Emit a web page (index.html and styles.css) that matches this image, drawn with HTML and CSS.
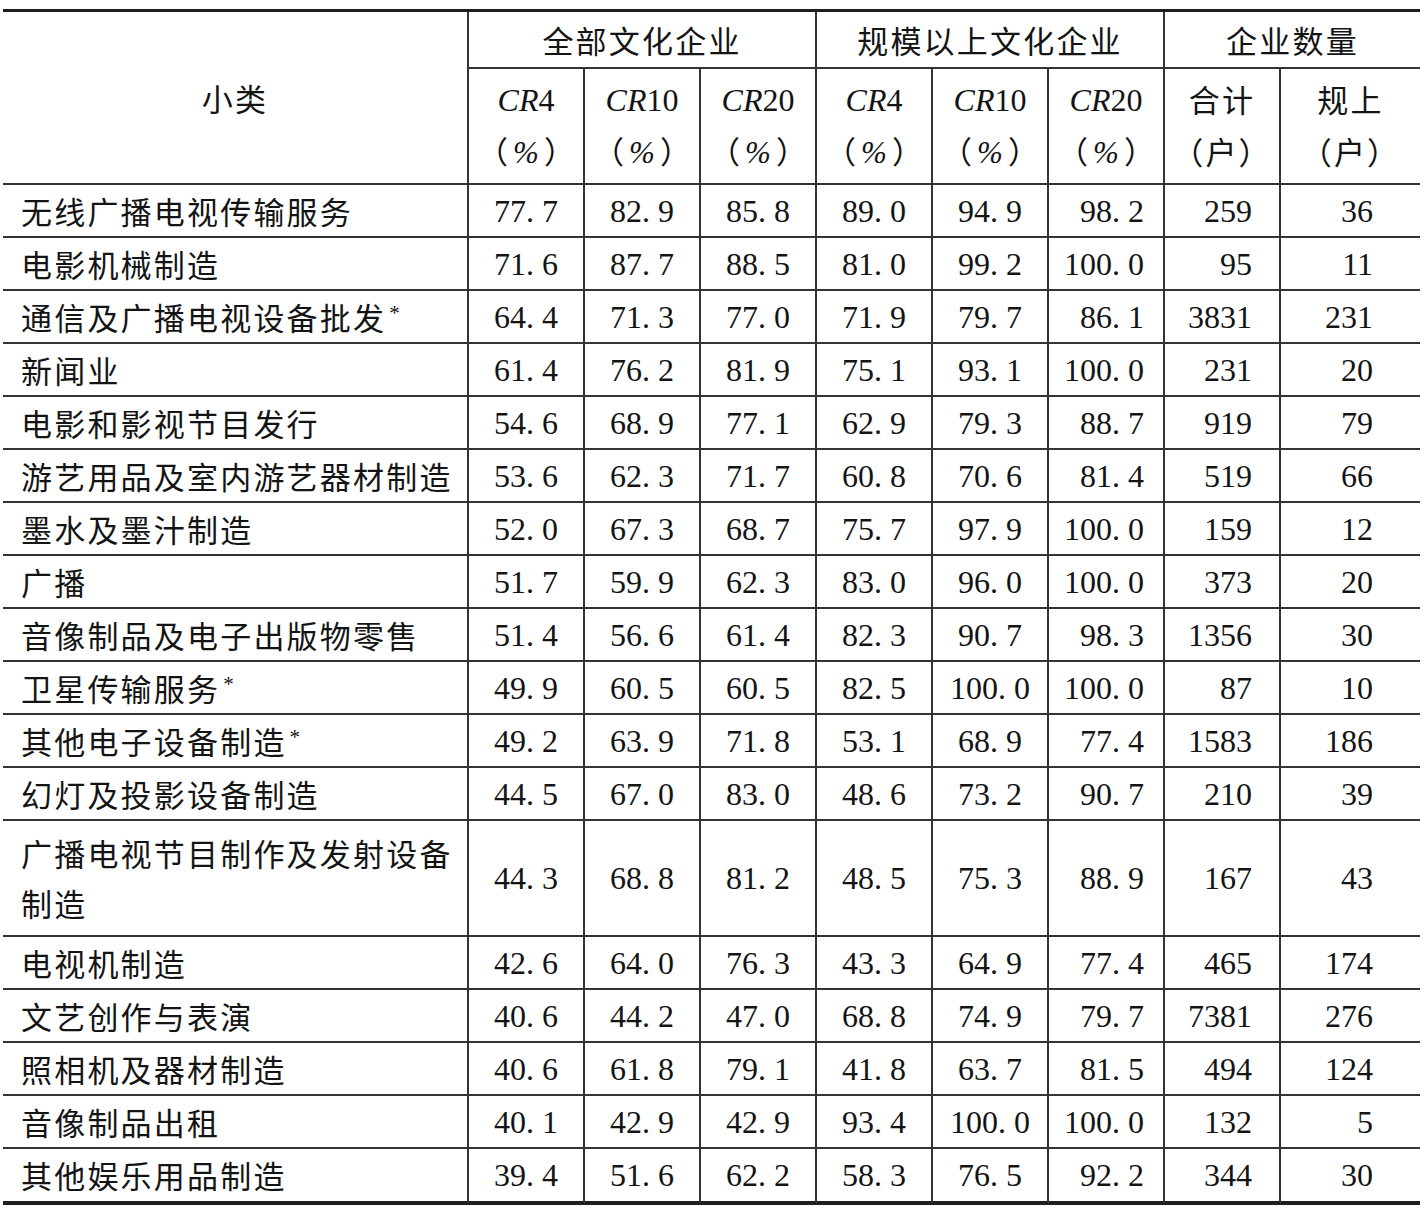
FILE: index.html
```html
<!DOCTYPE html>
<html lang="zh-CN">
<head>
<meta charset="utf-8">
<title>文化产业小类集中度</title>
<link rel="stylesheet" href="styles.css">
</head>
<body>
<div class="page">
<table class="cr">
  <colgroup>
    <col class="c-name">
    <col class="c-n"><col class="c-n"><col class="c-n">
    <col class="c-n"><col class="c-n"><col class="c-n">
    <col class="c-n"><col class="c-last">
  </colgroup>
  <thead>
    <tr class="h1">
      <th rowspan="2" class="zh">小类</th>
      <th colspan="3" class="zh">全部文化企业</th>
      <th colspan="3" class="zh">规模以上文化企业</th>
      <th colspan="2" class="zh end">企业数量</th>
    </tr>
    <tr class="h2">
      <th><span class="en"><i>CR</i>4</span><br><span class="zh unit">（<i class="pct">%</i>）</span></th>
      <th><span class="en"><i>CR</i>10</span><br><span class="zh unit">（<i class="pct">%</i>）</span></th>
      <th><span class="en"><i>CR</i>20</span><br><span class="zh unit">（<i class="pct">%</i>）</span></th>
      <th><span class="en"><i>CR</i>4</span><br><span class="zh unit">（<i class="pct">%</i>）</span></th>
      <th><span class="en"><i>CR</i>10</span><br><span class="zh unit">（<i class="pct">%</i>）</span></th>
      <th><span class="en"><i>CR</i>20</span><br><span class="zh unit">（<i class="pct">%</i>）</span></th>
      <th><span class="zh">合计<br>（户）</span></th>
      <th class="end"><span class="zh">规上<br>（户）</span></th>
    </tr>
  </thead>
  <tbody>
    <tr><td class="name">无线广播电视传输服务</td><td>77. 7</td><td>82. 9</td><td>85. 8</td><td>89. 0</td><td>94. 9</td><td class="r6">98. 2</td><td class="tot">259</td><td class="big">36</td></tr>
    <tr><td class="name">电影机械制造</td><td>71. 6</td><td>87. 7</td><td>88. 5</td><td>81. 0</td><td>99. 2</td><td class="r6">100. 0</td><td class="tot">95</td><td class="big">11</td></tr>
    <tr><td class="name">通信及广播电视设备批发<sup>*</sup></td><td>64. 4</td><td>71. 3</td><td>77. 0</td><td>71. 9</td><td>79. 7</td><td class="r6">86. 1</td><td class="tot">3831</td><td class="big">231</td></tr>
    <tr><td class="name">新闻业</td><td>61. 4</td><td>76. 2</td><td>81. 9</td><td>75. 1</td><td>93. 1</td><td class="r6">100. 0</td><td class="tot">231</td><td class="big">20</td></tr>
    <tr><td class="name">电影和影视节目发行</td><td>54. 6</td><td>68. 9</td><td>77. 1</td><td>62. 9</td><td>79. 3</td><td class="r6">88. 7</td><td class="tot">919</td><td class="big">79</td></tr>
    <tr><td class="name">游艺用品及室内游艺器材制造</td><td>53. 6</td><td>62. 3</td><td>71. 7</td><td>60. 8</td><td>70. 6</td><td class="r6">81. 4</td><td class="tot">519</td><td class="big">66</td></tr>
    <tr><td class="name">墨水及墨汁制造</td><td>52. 0</td><td>67. 3</td><td>68. 7</td><td>75. 7</td><td>97. 9</td><td class="r6">100. 0</td><td class="tot">159</td><td class="big">12</td></tr>
    <tr><td class="name">广播</td><td>51. 7</td><td>59. 9</td><td>62. 3</td><td>83. 0</td><td>96. 0</td><td class="r6">100. 0</td><td class="tot">373</td><td class="big">20</td></tr>
    <tr><td class="name">音像制品及电子出版物零售</td><td>51. 4</td><td>56. 6</td><td>61. 4</td><td>82. 3</td><td>90. 7</td><td class="r6">98. 3</td><td class="tot">1356</td><td class="big">30</td></tr>
    <tr><td class="name">卫星传输服务<sup>*</sup></td><td>49. 9</td><td>60. 5</td><td>60. 5</td><td>82. 5</td><td>100. 0</td><td class="r6">100. 0</td><td class="tot">87</td><td class="big">10</td></tr>
    <tr><td class="name">其他电子设备制造<sup>*</sup></td><td>49. 2</td><td>63. 9</td><td>71. 8</td><td>53. 1</td><td>68. 9</td><td class="r6">77. 4</td><td class="tot">1583</td><td class="big">186</td></tr>
    <tr><td class="name">幻灯及投影设备制造</td><td>44. 5</td><td>67. 0</td><td>83. 0</td><td>48. 6</td><td>73. 2</td><td class="r6">90. 7</td><td class="tot">210</td><td class="big">39</td></tr>
    <tr class="tall"><td class="name">广播电视节目制作及发射设备<br>制造</td><td>44. 3</td><td>68. 8</td><td>81. 2</td><td>48. 5</td><td>75. 3</td><td class="r6">88. 9</td><td class="tot">167</td><td class="big">43</td></tr>
    <tr><td class="name">电视机制造</td><td>42. 6</td><td>64. 0</td><td>76. 3</td><td>43. 3</td><td>64. 9</td><td class="r6">77. 4</td><td class="tot">465</td><td class="big">174</td></tr>
    <tr><td class="name">文艺创作与表演</td><td>40. 6</td><td>44. 2</td><td>47. 0</td><td>68. 8</td><td>74. 9</td><td class="r6">79. 7</td><td class="tot">7381</td><td class="big">276</td></tr>
    <tr><td class="name">照相机及器材制造</td><td>40. 6</td><td>61. 8</td><td>79. 1</td><td>41. 8</td><td>63. 7</td><td class="r6">81. 5</td><td class="tot">494</td><td class="big">124</td></tr>
    <tr><td class="name">音像制品出租</td><td>40. 1</td><td>42. 9</td><td>42. 9</td><td>93. 4</td><td>100. 0</td><td class="r6">100. 0</td><td class="tot">132</td><td class="big">5</td></tr>
    <tr class="last"><td class="name">其他娱乐用品制造</td><td>39. 4</td><td>51. 6</td><td>62. 2</td><td>58. 3</td><td>76. 5</td><td class="r6">92. 2</td><td class="tot">344</td><td class="big">30</td></tr>
  </tbody>
</table>
</div>
</body>
</html>
```

FILE: styles.css
```css
html, body {
  margin: 0;
  padding: 0;
  background: #ffffff;
}

.page {
  padding: 9px 0 0 3px;
}

.cr {
  table-layout: fixed;
  width: 1417px;
  border-collapse: separate;
  border-spacing: 0;
  border-top: 3px solid #1e1e1e;
  color: #141414;
  font-family: "Liberation Serif", "Times New Roman", serif;
  font-size: 32px;
}

.c-name { width: 466px; }
.c-n { width: 116px; }
.c-last { width: 139px; }

.cr th,
.cr td {
  box-sizing: border-box;
  padding: 0;
  border-right: 2px solid #333333;
  border-bottom: 2px solid #333333;
  font-weight: normal;
  text-align: center;
  vertical-align: middle;
  white-space: nowrap;
}

.cr th.end,
.cr td.big {
  border-right: none;
}

.zh {
  font-family: "Noto Sans CJK SC", "Noto Sans CJK JP", sans-serif;
  font-size: 31px;
  letter-spacing: 2.2px;
}

.en i,
.pct {
  font-family: "Liberation Serif", "Times New Roman", serif;
}

.unit {
  letter-spacing: 0;
}

.pct {
  font-size: 31px;
  letter-spacing: 0;
  padding: 0 5px;
}

.h1 th {
  height: 57px;
  line-height: 40px;
}

.h2 th {
  height: 116px;
  line-height: 50px;
}

.h2 th .en {
  font-size: 32px;
}

.cr tbody td {
  height: 53px;
  line-height: 40px;
}

.cr tbody tr.tall td {
  height: 116px;
  line-height: 50px;
}

.cr tbody tr.last td {
  height: 56px;
  border-bottom: 4px solid #1e1e1e;
}

.cr td.name {
  text-align: left;
  padding-left: 18px;
  font-family: "Noto Sans CJK SC", "Noto Sans CJK JP", sans-serif;
  font-size: 31px;
  letter-spacing: 2.2px;
}

.cr td.name sup {
  font-family: "Liberation Serif", serif;
  font-size: 21px;
  letter-spacing: 0;
  vertical-align: 10px;
  line-height: 0;
  margin-left: 3px;
}

.cr td.r6 {
  text-align: right;
  padding-right: 19px;
}

.cr td.tot {
  text-align: right;
  padding-right: 27px;
}

.cr td.big {
  text-align: right;
  padding-right: 47px;
}
```
